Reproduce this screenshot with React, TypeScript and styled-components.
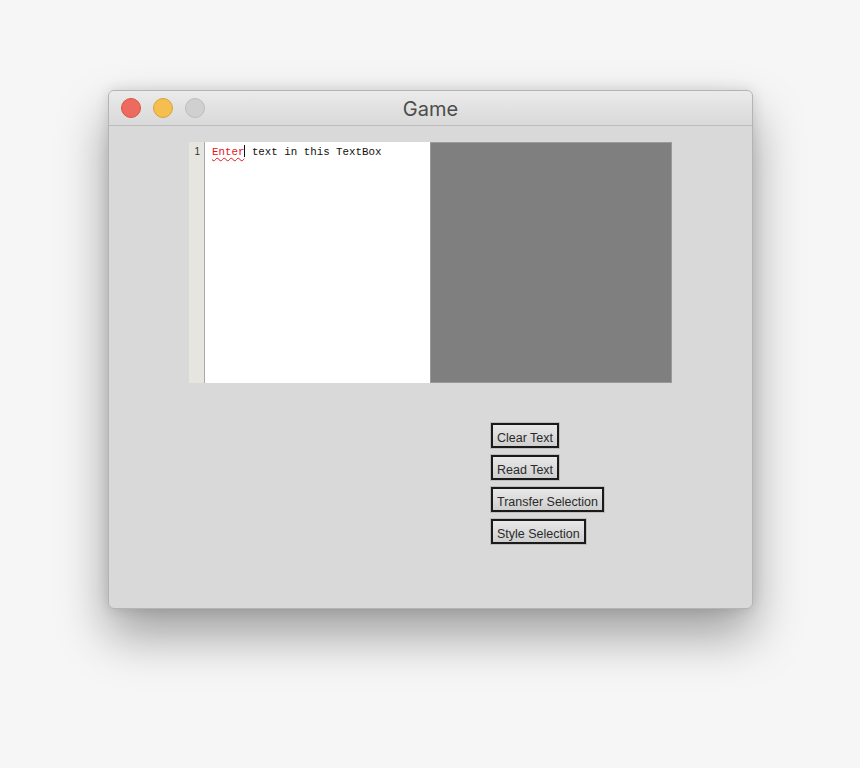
import React from "react";
import styled, { createGlobalStyle } from "styled-components";

const Global = createGlobalStyle`
  html, body { margin: 0; padding: 0; background: #f6f6f6; }
  body { width: 860px; height: 768px; overflow: hidden; font-family: "Liberation Sans", Arial, sans-serif; }
`;

const Page = styled.div`
  padding: 90px 0 0 108px;
`;

const Window = styled.div`
  width: 645px;
  height: 519px;
  box-sizing: border-box;
  border-radius: 6px;
  background: #d9d9d9;
  border: 1px solid #b4b4b4;
  box-shadow: 0 26px 50px rgba(0, 0, 0, 0.36), 0 0 14px rgba(0, 0, 0, 0.12);
  display: flex;
  flex-direction: column;
  overflow: hidden;
`;

const TitleBar = styled.div`
  height: 35px;
  flex: none;
  box-sizing: border-box;
  border-bottom: 1px solid #bdbdbd;
  background: linear-gradient(#ebebeb, #d9d9d9);
  display: grid;
  grid-template-columns: 1fr auto 1fr;
  align-items: center;
  padding: 0 12px;
`;

const Lights = styled.div`
  display: flex;
  gap: 12px;
`;

const Light = styled.span<{ $c: string; $b: string }>`
  width: 20px;
  height: 20px;
  border-radius: 50%;
  background: ${(p) => p.$c};
  box-sizing: border-box;
  border: 1px solid ${(p) => p.$b};
`;

const Title = styled.div`
  font-family: "Inter", "Liberation Sans", sans-serif;
  font-size: 20px;
  color: #4d4d4d;
  padding-top: 1px;
`;

const Body = styled.div`
  flex: 1;
  display: flex;
  flex-direction: column;
  padding: 16px 0 0 80px;
`;

const Editor = styled.div`
  display: flex;
  width: 483px;
  height: 241px;
`;

const Gutter = styled.div`
  width: 16px;
  background: #e6e5e0;
  border-right: 1px solid #a9a9a9;
  font-family: "Liberation Sans", Arial, sans-serif;
  font-size: 10px;
  color: #333;
  text-align: right;
  padding: 4px 4px 0 0;
  box-sizing: border-box;
`;

const TextArea = styled.div`
  width: 225px;
  background: #fff;
  padding: 3px 0 0 7px;
  box-sizing: border-box;
  font-family: "Liberation Mono", "Courier New", monospace;
  font-size: 10.8px;
  color: #111;
  white-space: pre;
`;

const Misspelled = styled.span`
  color: #e8141c;
  text-decoration: underline wavy #e8141c;
  text-decoration-thickness: 1px;
  text-underline-offset: 2px;
`;

const Caret = styled.span`
  display: inline-block;
  width: 1px;
  height: 12px;
  background: #111;
  vertical-align: -2px;
`;

const Canvas = styled.div`
  flex: 1;
  background: #7f7f7f;
  border: 1px solid #9a9a9a;
`;

const Buttons = styled.div`
  display: flex;
  flex-direction: column;
  align-items: flex-start;
  gap: 7px;
  margin: 40px 0 0 302px;
`;

const Button = styled.button`
  height: 25px;
  box-sizing: border-box;
  border: 2px solid #1a1a1a;
  outline: 1px solid #bdbdbd;
  background: linear-gradient(#e8e8e8, #cfcfcf);
  font-family: "Liberation Sans", Arial, sans-serif;
  font-size: 12.5px;
  color: #2a2a2a;
  padding: 4px 4px 0 4px;
  margin: 0;
  border-radius: 0;
  line-height: 16px;
`;

export default function App() {
  return (
    <>
      <Global />
      <Page>
        <Window>
          <TitleBar>
            <Lights>
              <Light $c="#ed6a5e" $b="#d85446" />
              <Light $c="#f5bf4f" $b="#d9a23a" />
              <Light $c="#d0d0d0" $b="#bdbdbd" />
            </Lights>
            <Title>Game</Title>
            <div />
          </TitleBar>
          <Body>
            <Editor>
              <Gutter>1</Gutter>
              <TextArea>
                <Misspelled>Enter</Misspelled>
                <Caret />
                {" text in this TextBox"}
              </TextArea>
              <Canvas />
            </Editor>
            <Buttons>
              <Button>Clear Text</Button>
              <Button>Read Text</Button>
              <Button>Transfer Selection</Button>
              <Button>Style Selection</Button>
            </Buttons>
          </Body>
        </Window>
      </Page>
    </>
  );
}
